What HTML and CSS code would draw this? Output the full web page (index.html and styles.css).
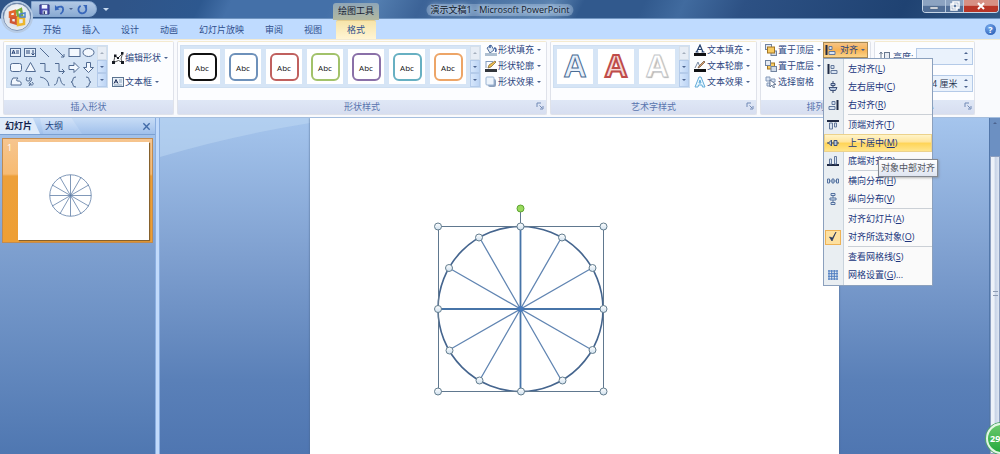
FILE: index.html
```html
<!DOCTYPE html>
<html lang="zh-CN">
<head>
<meta charset="utf-8">
<title>演示文稿1 - Microsoft PowerPoint</title>
<link rel="stylesheet" href="styles.css">
</head>
<body>
<svg class="defs" aria-hidden="true">
  <defs>
    <linearGradient id="gloss" x1="0" y1="0" x2="0" y2="1"><stop offset="0" stop-color="#fff"/><stop offset="1" stop-color="#cfe0ee"/></linearGradient>
    <symbol id="i-left" viewBox="0 0 12 12"><path d="M1.500 1v10" stroke="#1f2a44" stroke-width="2"/><path d="M4 2.500h3v3H4zM4 7.500h6v3H4z" fill="#d9e4f2" stroke="#63789c"/></symbol>
    <symbol id="i-center" viewBox="0 0 12 12"><path d="M6 0v12" stroke="#2d3c60"/><path d="M4 2.500h4v2H4zM2 6.500h8L8.500 9.500h-5z" fill="#b8c8df" stroke="#3c5079"/></symbol>
    <symbol id="i-right" viewBox="0 0 12 12"><path d="M10.500 1v10" stroke="#1f2a44" stroke-width="2"/><path d="M5 2.500h3v3H5zM2 7.500h6v3H2z" fill="#d9e4f2" stroke="#63789c"/></symbol>
    <symbol id="i-top" viewBox="0 0 12 12"><path d="M0 2h12" stroke="#1f2a44" stroke-width="2"/><path d="M2.500 4h3v6h-3zM7.500 4h2v4h-2z" fill="#d9e4f2" stroke="#63789c"/></symbol>
    <symbol id="i-middle" viewBox="0 0 12 12"><path d="M0 6h12" stroke="#2d3c60"/><path d="M1.500 6l3-3v6zM7 3.500h3v5H7z" fill="#b8c8df" stroke="#3c5079"/></symbol>
    <symbol id="i-bottom" viewBox="0 0 12 12"><path d="M0 10h12" stroke="#1f2a44" stroke-width="2"/><path d="M2.500 4h2v5h-2zM7.500 1.500h2V9h-2z" fill="#d9e4f2" stroke="#63789c"/></symbol>
    <symbol id="i-horiz" viewBox="0 0 12 12"><path d="M.5 4h2v4h-2zM5 4h2v4H5zM9.500 4h2v4h-2zM2.500 6H5M7 6h2.500" fill="#dce7f3" stroke="#55729f"/></symbol>
    <symbol id="i-vert" viewBox="0 0 12 12"><path d="M4 .5h4v2H4zM3 5h6v2H3zM4 9.500h4v2H4zM6 2.500V5M6 7v2.500" fill="#dce7f3" stroke="#55729f"/></symbol>
    <symbol id="i-grid" viewBox="0 0 12 12"><path d="M1 2h10M1 4.700h10M1 7.300h10M1 10h10M2 1v10M4.700 1v10M7.300 1v10M10 1v10" stroke="#4d7cc0"/></symbol>
    <symbol id="i-check" viewBox="0 0 12 12"><path d="M2.500 6l2.500 4 4-9-3.500 6z" fill="#26365f" stroke="#26365f" stroke-width=".7"/></symbol>
    <symbol id="i-launch" viewBox="0 0 8 8"><path d="M1 5V1h4M3.500 3.500L6 6M7 4v3H4" fill="none" stroke="#7089b5"/></symbol>
    <symbol id="i-textbox" viewBox="0 0 12 12"><rect x=".5" y="1.500" width="11" height="9" fill="#eaf1f8" stroke="#5a7390"/><path d="M2 7.500l2-4 2 4M3 6h2" fill="none" stroke="#26365f"/><path d="M7 4h3M7 6h3M2 9h8" stroke="#8ba2bb"/></symbol>
    <symbol id="i-edit" viewBox="0 0 12 12"><path d="M1.500 10.500L3 4l3 2 4.500-4.500L9 7l1.500 3.500-4-2z" fill="none" stroke="#555"/><path d="M2 2.500h2.500V5H2zM9 0h2.500v2.500H9zM0 9h3v3H0zM9 9h3v3H9zM5 5h2v2H5z" fill="#161a22"/></symbol>
    <symbol id="i-fill" viewBox="0 0 12 12"><path d="M2 4l4-3 3 5-4 3z" fill="#dfe8f3" stroke="#536f9b"/><path d="M5 4V1M9 4q3 0 1.500 4" fill="none" stroke="#3d60a0" stroke-width="1.500"/><rect y="9" width="12" height="3" fill="#aebfd1"/></symbol>
    <symbol id="i-line" viewBox="0 0 12 12"><path d="M1 1.500h7M1 1v7" stroke="#829bbd"/><path d="M3 8l1-3 6-4 1 1-5 5z" fill="#eebd4d" stroke="#765e36" stroke-width=".7"/><rect y="9" width="12" height="3" fill="#33363c"/></symbol>
    <symbol id="i-effect" viewBox="0 0 12 12"><rect x="3" y="3" width="8" height="8" rx="2" fill="#8ca0bd"/><rect x="1" y="1" width="8" height="8" rx="1" fill="#edf4fc" stroke="#9ab3d2"/></symbol>
    <symbol id="i-tfill" viewBox="0 0 12 12"><path d="M2.500 8L6 1l3 7M4 5.500h4M1.500 8h3M7.500 8h3" fill="none" stroke="#26426f" stroke-width="1.200"/><rect y="9" width="12" height="3" fill="#101114"/></symbol>
    <symbol id="i-tline" viewBox="0 0 12 12"><path d="M1 8l3-6 2 5" fill="none" stroke="#788ba5"/><path d="M4 8l1-2 5-5 1 1-5 5z" fill="#d9a370" stroke="#694c37" stroke-width=".7"/><rect y="9" width="12" height="3" fill="#101114"/></symbol>
    <symbol id="i-teffect" viewBox="0 0 12 12"><path d="M1 11L5 1h2l4 10H8.500L8 9H4.500L4 11zM5 7h2L6 4z" fill="#e9f7ff" stroke="#62acd9"/></symbol>
    <symbol id="i-front" viewBox="0 0 12 12"><rect x=".5" y=".5" width="6" height="5" fill="#e5eaf2" stroke="#70829f"/><rect x="6" y="7" width="5.500" height="4.500" fill="#d1dae7" stroke="#70829f"/><rect x="2.500" y="3" width="7" height="6" fill="#f7ca61" stroke="#a27524"/></symbol>
    <symbol id="i-back" viewBox="0 0 12 12"><rect x="2.500" y="3" width="7" height="6" fill="#f7ca61" stroke="#a27524"/><rect x=".5" y=".5" width="5" height="5" fill="#e5eaf2" stroke="#70829f"/><rect x="6" y="6.500" width="5.500" height="5" fill="#d1dae7" stroke="#70829f"/></symbol>
    <symbol id="i-select" viewBox="0 0 12 12"><path d="M1 1h4v4H1zM6 3h4v3H6zM2 7h3v3H2z" fill="#dbe5f4" stroke="#8398b8"/><path d="M5 4v7l2-2 1.500 3 1-.5L8.500 8.500H11z" fill="#fff" stroke="#546788" stroke-width=".8"/></symbol>
    <symbol id="i-height" viewBox="0 0 12 12"><path d="M2 1v10M.5 3L2 1l1.500 2M.5 9L2 11l1.500-2" fill="none" stroke="#68788f"/><rect x="5.500" y="1.500" width="5" height="9" fill="#e8edf5" stroke="#68788f"/></symbol>
    <symbol id="wheel" viewBox="0 0 166 166"><circle cx="83" cy="83" r="80"/><path d="M83 3v160M3 83h160M42 12l82 142M124 12L42 154M12 42l142 82M154 42L12 124"/></symbol>
  </defs>
</svg>

<header class="titlebar">
  <button class="orb" aria-label="Office 按钮">
    <svg viewBox="0 0 20 20" fill="none" stroke-width="2.500"><path d="M3 5.500l5-1.500v5L3 9.500z" stroke="#e2662c"/><path d="M10 4l4-2 1 6-4 1z" stroke="#79ad3d"/><path d="M4 11l5-.500v6L4 15z" stroke="#cf5634"/><path d="M11 11h6v6l-6 1z" stroke="#edb62d"/><path d="M13 7l5-1v4h-5z" stroke="#4d83c9" stroke-width="1.500"/></svg>
  </button>
  <div class="quick">
    <button aria-label="保存"><svg viewBox="0 0 12 12"><path d="M1 1h10v10H1z" fill="#4a4bb0" stroke="#2d3279"/><path d="M3 1h6v4H3z" fill="#f1f5ff"/><path d="M4 7h5v4H4z" fill="#dce5f5"/><path d="M5 8h1.500v3H5z" fill="#27305f"/></svg></button>
    <button aria-label="撤消"><svg viewBox="0 0 12 12"><path d="M3 4q7-3 7 2 0 3-3 5" fill="none" stroke="#3766ba" stroke-width="2"/><path d="M1 1v6l5-1z" fill="#3766ba"/></svg></button>
    <i class="arrow"></i>
    <button aria-label="重复"><svg viewBox="0 0 12 12"><path d="M4 2a4.300 4.300 0 1 0 5 1" fill="none" stroke="#3766ba" stroke-width="2"/><path d="M6.500 1H11v4.500z" fill="#3766ba"/></svg></button>
  </div>
  <button class="customize" aria-label="自定义快速访问工具栏"><i class="arrow light"></i></button>
  <h1 class="title">演示文稿1 - Microsoft PowerPoint</h1>
  <div class="window-buttons">
    <button aria-label="最小化"><svg viewBox="0 0 12 10"><path d="M2 6h8v2H2z" fill="#fff" stroke="#56667d" stroke-width=".6"/></svg></button>
    <button aria-label="还原"><svg viewBox="0 0 12 10"><path d="M4 1h6v6H4zM2 3h6v6H2z" fill="#607da5" stroke="#fff" stroke-width="1.500"/></svg></button>
    <button class="close" aria-label="关闭"><svg viewBox="0 0 12 10"><path d="M3 2l6 6M9 2L3 8" stroke="#fff" stroke-width="2"/></svg></button>
  </div>
</header>

<nav class="tabs" aria-label="功能区">
  <button>开始</button><button>插入</button><button>设计</button><button>动画</button><button>幻灯片放映</button><button>审阅</button><button>视图</button>
  <div class="context"><span class="context-title">绘图工具</span><button class="active">格式</button></div>
  <button class="help" aria-label="帮助">?</button>
</nav>

<section class="ribbon">
  <section class="group g-insert">
    <div class="content">
      <div class="gallery">
        <svg class="shapes" viewBox="0 0 90 42" fill="none" stroke="#516b92">
          <rect x="3.500" y="2.500" width="10" height="8" fill="#e9f1fb"/><path d="M5 8l1.500-4L8 8M5.500 7h2M9 5h3M9 7h3" stroke="#2b4779"/>
          <rect x="17.500" y="2.500" width="11" height="8" fill="#e3edf8"/><path d="M19 5h4M19 7h4M26 4v5M24.500 7.500L26 9l1.500-1.500" stroke="#2b4779"/>
          <path d="M33 2l9 9M48 2l9 9M54 11h3V8"/>
          <rect x="62" y="2.500" width="11" height="8" fill="#f3f8fe"/><ellipse cx="81.500" cy="6.500" rx="5.500" ry="4" fill="#f3f8fe"/>
          <rect x="3.500" y="17.500" width="11" height="8" rx="2" fill="#f3f8fe"/><path d="M23.500 16.500l5 9h-10z" fill="#f3f8fe"/>
          <path d="M33 17.500h5v8h5M48 17.500h4v8h5M55 23l2.500 2.500L55 28"/>
          <path d="M62 19.500h5v-3l5 5-5 5v-3h-5z" fill="#f3f8fe"/><path d="M79.500 16.500h4v5h3l-5 5-5-5h3z" fill="#f3f8fe"/>
          <path d="M6 32h5q-3 3 0 3 4 0 3 4H4q0-5 2-7z" fill="#f3f8fe"/><path d="M20 31q-2 4 1 4t1-3q4-1 2 3-4 3 0 4 4 0 1-3M24 37l-2 3"/>
          <path d="M33 31q8 1 9 9M47 39c4 0 3-8 5-8s1 8 6 8"/><path d="M69 31q-3 0-3 2 0 3-2 3 2 0 2 3 0 2 3 2M79 31q3 0 3 2 0 3 2 3-2 0-2 3 0 2-3 2"/>
        </svg>
        <div class="scroll"><button aria-label="上一行" class="up"><i class="arrow"></i></button><button aria-label="下一行"><i class="arrow"></i></button><button aria-label="更多形状" class="more"><i class="arrow"></i></button></div>
      </div>
      <div class="commands two"><button><svg><use href="#i-edit"/></svg>编辑形状<i class="arrow"></i></button><button><svg><use href="#i-textbox"/></svg>文本框<i class="arrow"></i></button></div>
    </div>
    <h2>插入形状</h2>
  </section>

  <section class="group g-style">
    <div class="content">
      <div class="gallery">
        <div class="tiles">
          <button class="tile black"><span>Abc</span></button><button class="tile blue"><span>Abc</span></button><button class="tile red"><span>Abc</span></button><button class="tile green"><span>Abc</span></button><button class="tile purple"><span>Abc</span></button><button class="tile teal"><span>Abc</span></button><button class="tile orange"><span>Abc</span></button>
        </div>
        <div class="scroll"><button aria-label="上一行" class="up"><i class="arrow"></i></button><button aria-label="下一行"><i class="arrow"></i></button><button aria-label="更多样式" class="more"><i class="arrow"></i></button></div>
      </div>
      <div class="commands"><button><svg><use href="#i-fill"/></svg>形状填充<i class="arrow"></i></button><button><svg><use href="#i-line"/></svg>形状轮廓<i class="arrow"></i></button><button><svg><use href="#i-effect"/></svg>形状效果<i class="arrow"></i></button></div>
    </div>
    <h2>形状样式<button class="launch" aria-label="设置形状格式"><svg><use href="#i-launch"/></svg></button></h2>
  </section>

  <section class="group g-art">
    <div class="content">
      <div class="gallery">
        <div class="tiles">
          <button class="tile art a-blue">A</button><button class="tile art a-red">A</button><button class="tile art a-white">A</button>
        </div>
        <div class="scroll"><button aria-label="上一行" class="up"><i class="arrow"></i></button><button aria-label="下一行"><i class="arrow"></i></button><button aria-label="更多艺术字" class="more"><i class="arrow"></i></button></div>
      </div>
      <div class="commands"><button><svg><use href="#i-tfill"/></svg>文本填充<i class="arrow"></i></button><button><svg><use href="#i-tline"/></svg>文本轮廓<i class="arrow"></i></button><button><svg><use href="#i-teffect"/></svg>文本效果<i class="arrow"></i></button></div>
    </div>
    <h2>艺术字样式<button class="launch" aria-label="设置文本格式"><svg><use href="#i-launch"/></svg></button></h2>
  </section>

  <section class="group g-arrange">
    <div class="content">
      <div class="commands"><button><svg><use href="#i-front"/></svg>置于顶层<i class="arrow"></i></button><button><svg><use href="#i-back"/></svg>置于底层<i class="arrow"></i></button><button><svg><use href="#i-select"/></svg>选择窗格</button></div>
      <div class="align">
        <button class="align-button" aria-expanded="true"><svg><use href="#i-left"/></svg>对齐<i class="arrow"></i></button>
        <div class="menu" role="menu">
          <button role="menuitem"><span><svg><use href="#i-left"/></svg></span>左对齐(<u>L</u>)</button>
          <button role="menuitem"><span><svg><use href="#i-center"/></svg></span>左右居中(<u>C</u>)</button>
          <button role="menuitem"><span><svg><use href="#i-right"/></svg></span>右对齐(<u>R</u>)</button>
          <hr>
          <button role="menuitem"><span><svg><use href="#i-top"/></svg></span>顶端对齐(<u>T</u>)</button>
          <button role="menuitem" class="hover"><span><svg><use href="#i-middle"/></svg></span>上下居中(<u>M</u>)</button>
          <button role="menuitem"><span><svg><use href="#i-bottom"/></svg></span>底端对齐(<u>B</u>)</button>
          <hr>
          <button role="menuitem"><span><svg><use href="#i-horiz"/></svg></span>横向分布(<u>H</u>)</button>
          <button role="menuitem"><span><svg><use href="#i-vert"/></svg></span>纵向分布(<u>V</u>)</button>
          <hr>
          <button role="menuitem"><span></span>对齐幻灯片(<u>A</u>)</button>
          <button role="menuitem"><span class="checked"><svg><use href="#i-check"/></svg></span>对齐所选对象(<u>O</u>)</button>
          <hr>
          <button role="menuitem"><span></span>查看网格线(<u>S</u>)</button>
          <button role="menuitem"><span><svg><use href="#i-grid"/></svg></span>网格设置(<u>G</u>)...</button>
          <div class="tooltip" role="tooltip">对象中部对齐</div>
        </div>
      </div>
    </div>
    <h2>排列</h2>
  </section>

  <section class="group g-size">
    <div class="sizes">
      <div class="size"><label for="h"><svg><use href="#i-height"/></svg>高度:</label><div class="spin"><input id="h" type="text"><div><i class="arrow flip"></i><i class="arrow"></i></div></div></div>
      <div class="size"><label for="w"><svg><use href="#i-height"/></svg>宽度:</label><div class="spin"><input id="w" type="text" value="4 厘米"><div><i class="arrow flip"></i><i class="arrow"></i></div></div></div>
    </div>
    <h2>大小<button class="launch" aria-label="大小和位置"><svg><use href="#i-launch"/></svg></button></h2>
  </section>
</section>

<main class="workspace">
  <aside class="pane">
    <div class="pane-tabs"><button class="on">幻灯片</button><button>大纲</button><button class="pane-close" aria-label="关闭窗格"><svg viewBox="0 0 10 10"><path d="M1.500 1.500l7 7M8.500 1.500l-7 7" stroke="#426ba8" stroke-width="1.500"/></svg></button></div>
    <div class="thumb"><span>1</span><div class="mini"><svg class="wheel"><use href="#wheel"/></svg></div></div>
  </aside>
  <div class="splitter"></div>
  <div class="canvas">
    <svg class="sheen" viewBox="0 0 150 40" preserveAspectRatio="none"><path d="M0 0h150v5Q70 18 0 39z" fill="#c0d9f4" opacity=".5"/></svg>
    <div class="slide">
      <svg class="drawing" viewBox="0 0 190 200" fill="none">
        <g stroke="#6185b2" stroke-width="1.300"><path d="M53.500 37.500l82 143M135.500 37.500l-82 143M23 68l143 82M166 68L23 150"/><path d="M94.500 27v165M12 109h165" stroke="#4774a8" stroke-width="1.800"/></g>
        <circle cx="94.500" cy="109" r="82.500" stroke="#45658e" stroke-width="1.600"/>
        <path d="M12.500 26.500h165v165h-165zM94.500 12v14" stroke="#60788f"/>
        <circle cx="94.500" cy="109" r="3" fill="#4679bb"/>
        <g fill="url(#gloss)" stroke="#637d8e"><circle cx="12" cy="26.500" r="3.500"/><circle cx="94.500" cy="26.500" r="3.500"/><circle cx="177.500" cy="26.500" r="3.500"/><circle cx="12" cy="109" r="3.500"/><circle cx="177.500" cy="109" r="3.500"/><circle cx="12" cy="191.500" r="3.500"/><circle cx="95" cy="191.500" r="3.500"/><circle cx="177.500" cy="191.500" r="3.500"/><circle cx="53" cy="37.500" r="3.500"/><circle cx="136" cy="37.500" r="3.500"/><circle cx="23" cy="68" r="3.500"/><circle cx="166.500" cy="68" r="3.500"/><circle cx="23.500" cy="150.500" r="3.500"/><circle cx="166.500" cy="150" r="3.500"/><circle cx="53.500" cy="180.500" r="3.500"/><circle cx="136.500" cy="180.500" r="3.500"/></g>
        <circle cx="94.500" cy="8.500" r="3.500" fill="#99da5d" stroke="#5da331"/>
      </svg>
    </div>
  </div>
  <div class="scrollbar"><div class="track"><i class="arrow flip"></i></div><div class="handle"><i></i></div></div>
  <div class="badge">29</div>
</main>
</body>
</html>
```
FILE: styles.css
```css
* { box-sizing: border-box; }
body {
  margin: 0;
  min-height: 100vh;
  display: flex;
  flex-direction: column;
  overflow: hidden;
  font: 9px/12px "Open Sans", "Noto Sans CJK SC", sans-serif;
  color: #2c4680;
  background: #bfdbff;
}
button {
  font: inherit;
  color: inherit;
  padding: 0;
  border: 0;
  background: none;
  white-space: nowrap;
}
h1, h2 { margin: 0; font: inherit; }
.defs { position: absolute; width: 0; height: 0; }
.arrow {
  display: block;
  flex: none;
  width: 4px;
  border: 2px solid transparent;
  border-top-color: #4c6490;
  border-bottom: 0;
}
.arrow.flip { transform: rotate(180deg); }
.arrow.light { border-top-color: #c8daf0; width: 6px; border-width: 3px 3px 0; }

/* Title bar */
.titlebar {
  position: relative;
  display: flex;
  align-items: flex-start;
  justify-content: space-between;
  height: 19px;
  padding-left: 31px;
  background: linear-gradient(115deg, #2f5488 0 12%, #2d588f 20%, #4470a8 23% 33%, #5580b2 37%, #3c6397 42%, #5a82b0 55%, #31598d 58% 64%, #416b9f 68%, #2d5184 74%, #1f4272 90%, #315783);
  border-bottom: 1px solid #6f94c0;
}
.orb {
  position: absolute;
  z-index: 2;
  left: 3px;
  top: 3px;
  width: 28px;
  height: 28px;
  border-radius: 50%;
  border: 1px solid #8396b3;
  background: radial-gradient(circle at 50% 35%, #fff, #dce3ec 60%, #f3f7fb);
  box-shadow: 0 0 0 2px #b7cbe4;
}
.orb svg { display: block; width: 20px; height: 20px; margin: 3px; }
.quick {
  display: flex;
  align-items: center;
  gap: 4px;
  height: 16px;
  margin-top: 1px;
  padding: 0 8px 0 7px;
  border: 1px solid #86a7cf;
  border-radius: 0 8px 8px 0;
  background: linear-gradient(#b3c9e5, #8aabd3);
}
.quick svg { display: block; width: 11px; height: 11px; }
.customize { margin: 8px auto 0 6px; }
.title {
  position: absolute;
  left: 50%;
  top: 4px;
  transform: translateX(-50%);
  padding: 0 4px;
  color: #10182a;
  white-space: nowrap;
  border-radius: 6px;
  background: rgba(190, 212, 236, .35);
  text-shadow: 0 0 4px #cfe0f2, 0 0 6px #cfe0f2;
}
.window-buttons {
  display: flex;
  height: 13px;
  margin-right: 1px;
  border: 1px solid #c6d5e6;
  border-top: 0;
  border-radius: 0 0 4px 4px;
  overflow: hidden;
}
.window-buttons button {
  width: 18px;
  border-right: 1px solid #b4c8df;
  background: linear-gradient(#8ca3c1 45%, #526f97 50%);
}
.window-buttons button:first-child { width: 23px; }
.window-buttons .close { width: 34px; border: 0; background: linear-gradient(#d79084 45%, #b83527 50%); }
.window-buttons svg { display: block; width: 12px; height: 10px; margin: 0 auto; }

/* Ribbon tabs */
.tabs {
  display: flex;
  align-items: stretch;
  gap: 1px;
  height: 20px;
  padding: 1px 4px 0 33px;
  background: #bfdbff;
  color: #2f4f8d;
}
.tabs button { padding: 0 10px; }
.context { position: relative; display: flex; margin-left: 3px; }
.tabs .active {
  padding: 0 11px;
  border: 1px solid #e5cd8e;
  border-width: 1px 0 0;
  border-radius: 2px 2px 0 0;
  background: linear-gradient(#f6e4a9, #fff5d4);
}
.context-title {
  position: absolute;
  bottom: 100%;
  left: -3px;
  right: -3px;
  padding: 2px 0 3px;
  text-align: center;
  white-space: nowrap;
  color: #182233;
  border-radius: 3px 3px 0 0;
  background: linear-gradient(#8fa6b8, #b3b99f);
}
.tabs .help {
  align-self: center;
  width: 11px;
  height: 11px;
  margin-left: auto;
  padding: 0;
  border-radius: 50%;
  background: radial-gradient(circle at 35% 30%, #75a9ec, #1d50ad);
  color: #fff;
  font-weight: bold;
  line-height: 11px;
}

/* Ribbon */
.ribbon {
  position: relative;
  z-index: 3;
  display: flex;
  gap: 3px;
  padding: 1px 3px 2px;
  background: #f9fafd;
  border-top: 1px solid #f3ead1;
  border-bottom: 1px solid #a5bede;
}
.group {
  display: flex;
  flex-direction: column;
  border: 1px solid #dfe2ea;
  border-top-color: #f4ead0;
  border-radius: 2px;
  background: #fcfdff;
}
.group h2 {
  position: relative;
  height: 14px;
  margin-top: auto;
  padding-top: 1px;
  text-align: center;
  color: #5874ae;
  background: linear-gradient(#dfe7f6, #d7def0);
}
.launch { position: absolute; right: 2px; top: 2px; }
.launch svg { display: block; width: 8px; height: 8px; }
.content { display: flex; height: 58px; padding: 0 5px 0 2px; }
.gallery {
  display: flex;
  height: 43px;
  margin-top: 3px;
  border: 1px solid #cfdff1;
  background: #d6e5f6;
}
.shapes { width: 90px; height: 42px; }
.scroll { display: flex; flex-direction: column; width: 10px; }
.scroll button {
  flex: 1;
  display: grid;
  place-items: center;
  border: 1px solid #b4cbea;
  background: linear-gradient(90deg, #d6e6fb, #bdd5f5);
}
.scroll .up { background: #e7edf5; border-color: #d5dfea; }
.scroll .up .arrow { transform: rotate(180deg); border-top-color: #a5afbd; }
.scroll .more .arrow { box-shadow: 0 -3px 0 -1px #4c6490; }
.tiles { display: flex; gap: 5px; padding: 3px 4px 3px 3px; }
.tile { width: 36px; height: 35px; display: grid; place-items: center; background: #fff; }
.tile span {
  width: 29px;
  height: 28px;
  border: 2px solid;
  border-radius: 6px;
  font-size: 8px;
  line-height: 26px;
  text-align: center;
}
.black span { border-color: #111; color: #111; }
.blue span { border-color: #6e91ba; color: #111; }
.red span { border-color: #c0605e; color: #111; }
.green span { border-color: #a2c26a; color: #111; }
.purple span { border-color: #8a70a8; color: #111; }
.teal span { border-color: #67b0c2; color: #111; }
.orange span { border-color: #eda567; color: #111; }
.art { font: bold 32px/35px "Liberation Sans", sans-serif; }
.a-blue { color: #e9f1fa; -webkit-text-stroke: 1px #4a6c94; }
.a-red { color: #f4dad8; -webkit-text-stroke: 2px #bf4c4a; }
.a-white { color: #fff; -webkit-text-stroke: 1px #c5c8cc; text-shadow: 1px 1px 1px #aaa; }
.commands {
  display: grid;
  grid-auto-rows: 16px;
  align-content: start;
  margin-left: 4px;
}
.commands button { display: flex; align-items: center; gap: 1px; }
.commands svg, .align svg { flex: none; width: 12px; height: 12px; }
.commands .arrow { margin-left: 2px; }
.commands.two { grid-auto-rows: 24px; margin-top: 4px; }
.g-art .content { padding-right: 6px; }
.g-arrange .content { padding: 0 2px 0 0; }

/* Align button and its menu */
.align { position: relative; z-index: 5; margin-left: 2px; height: 16px; }
.align-button {
  display: flex;
  align-items: center;
  gap: 3px;
  height: 16px;
  padding: 0 2px 0 1px;
  border: 1px solid #a98a54;
  background: linear-gradient(#f5c486, #f7b254 50%, #fcd58a);
}
.menu {
  position: absolute;
  left: 0;
  top: 100%;
  width: 110px;
  padding: 1px 0;
  border: 1px solid #8ba0bd;
  background: linear-gradient(90deg, #e9eef2 19px, #c9d3dc 19px 20px, #fafafa 20px);
  color: #20357c;
}
.menu button { display: flex; align-items: center; width: 100%; height: 18px; }
.menu button span { display: grid; place-items: center; width: 18px; height: 16px; flex: none; margin-right: 6px; }
.menu .checked { width: 16px; height: 15px; margin: 0 7px 0 1px; border: 1px solid #eeb255; background: #fde0a0; }
.menu .hover { background: linear-gradient(#fff6cf, #ffe49a 45%, #ffd455 50%, #ffe793); box-shadow: inset 0 0 0 1px #ecd28c; }
.menu hr { height: 1px; margin: 0 0 1px 24px; border: 0; background: #cbd0d6; }
.tooltip {
  position: absolute;
  left: 54px;
  top: 100px;
  padding: 2px;
  border: 1px solid #84888f;
  white-space: nowrap;
  color: #53565e;
  background: linear-gradient(#fff, #dfe5f1);
  box-shadow: 1px 1px 2px #7778;
}

/* Size group */
.sizes { display: grid; gap: 10px; height: 58px; padding: 6px 1px 0 4px; align-content: start; }
.size { display: flex; align-items: center; }
.size label { display: flex; align-items: center; gap: 2px; width: 37px; }
.size label svg { width: 12px; height: 12px; }
.spin {
  display: flex;
  justify-content: space-between;
  width: 57px;
  height: 17px;
  padding-right: 4px;
  border: 1px solid #b4cae8;
  background: #eaf2fc;
}
.spin input { width: 46px; padding: 0 0 0 15px; border: 0; background: none; font: inherit; color: #273451; }
.spin > div { display: flex; flex-direction: column; justify-content: center; gap: 5px; }

/* Workspace */
.workspace { position: relative; flex: 1; display: flex; overflow: hidden; }
.pane { width: 155px; background: linear-gradient(#a8c6ec, #7d9fcf 40%, #4f77b1); }
.pane-tabs {
  display: flex;
  align-items: stretch;
  height: 17px;
  border-bottom: 1px solid #7ba0d2;
  background: linear-gradient(#c7dcf6, #a0c0eb);
  color: #20417d;
}
.pane-tabs button { padding: 0 8px 0 5px; }
.pane-tabs button:nth-child(2) {
  padding: 0 19px 0 5px;
  background: linear-gradient(#d3e3f8, #a9c7ef);
  clip-path: polygon(0 0, 75% 0, 100% 100%, 8% 100%);
}
.pane-tabs .on { background: #dfebfa; color: #111f4b; font-weight: bold; clip-path: polygon(0 0, 82% 0, 100% 100%, 0 100%); }
.pane-tabs .pane-close { margin-left: auto; padding: 0 4px; }
.pane-close svg { display: block; width: 9px; height: 9px; }
.thumb {
  display: flex;
  margin: 3px 2px 0;
  padding: 3px 3px 2px 4px;
  border: 1px solid #c18b50;
  background: linear-gradient(#f6c58f, #f7bb72 34%, #eda03a 36%, #ee9f34);
  color: #fff;
}
.thumb span { width: 11px; }
.mini { flex: 1; height: 98px; padding: 32px 0 0 31px; background: #fff; box-shadow: 1px 1px 1px #86612c; }
.wheel { display: block; width: 43px; height: 43px; fill: none; stroke: #5c7ba4; stroke-width: 3px; }
.splitter { width: 5px; border: 1px solid #8aaee0; border-width: 0 1px; background: #c1dafb; }
.canvas {
  position: relative;
  flex: 1;
  display: flex;
  padding: 0 15%;
  background: linear-gradient(#a5c5ed, #7e9fcf 42%, #5a80b8 78%, #4f76b1);
}
.sheen { position: absolute; left: 0; top: 0; width: 18.1%; height: 40px; }
.slide { position: relative; flex: 1; background: #fff; box-shadow: 0 0 2px #4a6489; }
.drawing { position: absolute; left: calc(50% - 149px); top: 82px; width: 190px; height: 200px; }
.scrollbar { display: flex; flex-direction: column; width: 11px; border-left: 1px solid #5277aa; background: #d7e2f1; }
.track { height: 38px; padding: 4px 3px; background: #6c90c2; }
.handle {
  flex: 1;
  display: grid;
  place-items: center;
  border: 1px solid #8c9fc0;
  background: linear-gradient(90deg, #edf2f9 40%, #c6d2e6 50%, #dfe7f3);
}
.handle i { width: 5px; height: 5px; margin-bottom: 24px; border: 1px solid #8b9ab2; border-width: 1px 0; }
.badge {
  position: absolute;
  right: -17px;
  bottom: 0;
  width: 31px;
  height: 31px;
  padding-left: 2px;
  border: 2px solid #e2f7e2;
  border-radius: 50%;
  background: linear-gradient(#69c86b, #25a93d);
  box-shadow: 0 0 0 1px #4fa765;
  color: #fff;
  font-weight: bold;
  line-height: 27px;
}
```
